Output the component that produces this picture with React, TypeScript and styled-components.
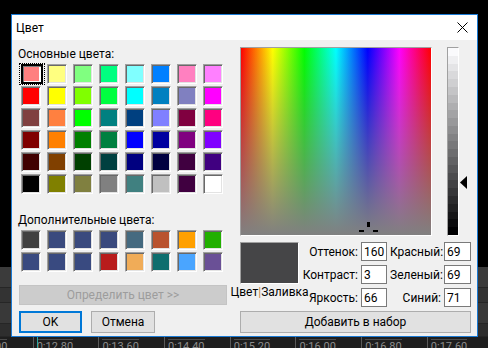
import React from 'react'
import styled, { createGlobalStyle } from 'styled-components'

const BASIC_COLORS = [
  '#ff8080', '#ffff80', '#80ff80', '#00ff80', '#80ffff', '#0080ff', '#ff80c0', '#ff80ff',
  '#ff0000', '#ffff00', '#80ff00', '#00ff40', '#00ffff', '#0080c0', '#8080c0', '#ff00ff',
  '#804040', '#ff8040', '#00ff00', '#008080', '#004080', '#8080ff', '#800040', '#ff0080',
  '#800000', '#ff8000', '#008000', '#008040', '#0000ff', '#0000a0', '#800080', '#8000ff',
  '#400000', '#804000', '#004000', '#004040', '#000080', '#000040', '#400040', '#400080',
  '#000000', '#808000', '#808040', '#808080', '#408080', '#c0c0c0', '#400040', '#ffffff',
]

const CUSTOM_COLORS = [
  '#414141', '#3a4a7e', '#3a4a7e', '#3a4a7e', '#456a80', '#b9532f', '#ffa000', '#22b000',
  '#394a80', '#394a80', '#394a80', '#b81c1c', '#f0ac58', '#0e6e6e', '#4aa5ff', '#6a5096',
]

const RULER_LABELS = ['0:12.00', '0:12.80', '0:13.60', '0:14.40', '0:15.20', '0:16.00', '0:16.80', '0:17.60', '0:18.40']

// stepped luminance bar, like the win32 dialog draws it
const LUM_STOPS = Array.from({ length: 24 }, (_, i) => {
  const v = Math.round(250 * (1 - i / 23))
  const from = ((i / 24) * 100).toFixed(2)
  const to = (((i + 1) / 24) * 100).toFixed(2)
  return `rgb(${v},${v},${Math.min(255, v + 2)}) ${from}% ${to}%`
}).join(', ')

const GlobalStyle = createGlobalStyle`
  html, body {
    margin: 0;
    padding: 0;
    background: #000;
  }
  body {
    width: 488px;
    height: 348px;
    overflow: hidden;
    font-family: Roboto, 'Liberation Sans', Arial, sans-serif;
  }
`

const Editor = styled.div`
  position: relative;
  width: 488px;
  height: 348px;
  background: #000;
  display: flex;
  flex-direction: column;
  overflow: hidden;
`

const Workspace = styled.div`
  flex: 1;
  display: flex;
  flex-direction: column;
  justify-content: flex-end;
`

const Track = styled.div<{ $shade: string; $h: number }>`
  height: ${p => p.$h}px;
  background: ${p => p.$shade};
  border-bottom: 1px solid #262626;
`

const Ruler = styled.div`
  position: relative;
  height: 11px;
  flex: 0 0 11px;
  background: #1e1e1e;
  display: flex;
  margin-left: -33px;
  overflow: hidden;
`

const Tick = styled.div`
  flex: 0 0 65.7px;
  box-sizing: border-box;
  border-left: 1px solid #5a5a5a;
  padding: 3px 0 0 3px;
  font-size: 11px;
  line-height: 12px;
  color: #8c8c8c;
  span {
    display: inline-block;
    border-top: 1px solid #4a4a4a;
    padding-top: 1px;
    margin-top: -1px;
  }
`

const Playhead = styled.div`
  position: absolute;
  left: 70px;
  top: 0;
  bottom: 0;
  width: 1px;
  background: #2aa7a0;
`

const Dialog = styled.div`
  position: absolute;
  left: 11px;
  top: 14px;
  width: 467px;
  height: 323px;
  box-sizing: border-box;
  border: 1px solid #1a7ad4;
  background: #f0f0f0;
  display: flex;
  flex-direction: column;
  font-size: 12px;
  color: #000;
`

const TitleBar = styled.div`
  height: 25px;
  flex: 0 0 25px;
  background: #fff;
  display: flex;
  align-items: center;
  justify-content: space-between;
  padding: 0 9px 0 4px;
  font-size: 12px;
`

const Body = styled.div`
  flex: 1;
  display: flex;
  gap: 13px;
  padding: 6px 5px 0 7px;
`

const LeftPane = styled.div`
  width: 208px;
  display: flex;
  flex-direction: column;
`

const SectionLabel = styled.div<{ $gap?: number }>`
  height: 17px;
  line-height: 17px;
  margin: ${p => p.$gap ?? 0}px 0 0 -1px;
  white-space: nowrap;
`

const SwatchGrid = styled.div`
  display: grid;
  grid-template-columns: repeat(8, 26px);
  grid-auto-rows: 22px;
`

const Cell = styled.div<{ $selected?: boolean }>`
  box-sizing: border-box;
  padding: 1px 0 0 2px;
  outline: ${p => (p.$selected ? '1px dotted #000' : 'none')};
  outline-offset: -1px;
`

const Swatch = styled.div<{ $color: string; $selected?: boolean }>`
  width: 18px;
  height: ${p => (p.$selected ? 16 : 18)}px;
  background: ${p => p.$color};
  border-style: solid;
  border-width: ${p => (p.$selected ? 2 : 1)}px;
  border-color: ${p => (p.$selected ? '#000' : '#a0a0a0 #fff #fff #a0a0a0')};
  box-shadow: ${p =>
    p.$selected
      ? 'inset 1px 1px 0 #7a7a7a, inset -2px -1px 0 #fff'
      : 'inset 1px 1px 0 #696969, inset -1px -1px 0 #e3e3e3'};
`

const Button = styled.button<{ $w?: number; $primary?: boolean }>`
  width: ${p => (p.$w ? `${p.$w}px` : '100%')};
  height: 22px;
  box-sizing: border-box;
  padding: 0;
  background: #e1e1e1;
  border: ${p => (p.$primary ? '2px solid #0078d7' : '1px solid #adadad')};
  font-family: inherit;
  font-size: 12px;
  color: #000;
  &:disabled {
    background: #cccccc;
    border-color: #c4c4c4;
    color: #9d9d9d;
  }
`

const DefineButton = styled(Button)`
  height: 20px;
  margin-top: 12px;
`

const ButtonRow = styled.div`
  display: flex;
  gap: 9px;
  margin-top: 6px;
`

const RightPane = styled.div`
  width: 231px;
  display: flex;
  flex-direction: column;
`

const PickerRow = styled.div`
  display: flex;
  height: 189px;
  margin-top: 1px;
`

const Spectrum = styled.div`
  position: relative;
  width: 192px;
  box-sizing: border-box;
  border: 1px solid;
  border-color: #a0a0a0 #fff #fff #a0a0a0;
  background:
    linear-gradient(to bottom, rgba(128, 128, 128, 0), #808080),
    linear-gradient(to right, #f00, #ff0, #0f0, #0ff, #00f, #f0f, #f00);
`

const Crosshair = styled.svg`
  position: absolute;
  left: 117px;
  top: 172px;
`

const LumSlider = styled.div`
  position: relative;
  margin-left: 15px;
  width: 21px;
`

const LumBar = styled.div`
  width: 12px;
  height: 100%;
  box-sizing: border-box;
  border: 1px solid;
  border-color: #a0a0a0 #fff #fff #a0a0a0;
  background: linear-gradient(to bottom, ${LUM_STOPS});
`

const LumArrow = styled.svg`
  position: absolute;
  left: 13px;
`

const ValuesRow = styled.div`
  display: flex;
  gap: 1px;
  margin-top: 6px;
`

const PreviewBlock = styled.div`
  width: 59px;
  display: flex;
  flex-direction: column;
  align-items: center;
`

const Preview = styled.div<{ $color: string }>`
  width: 59px;
  height: 42px;
  box-sizing: border-box;
  border: 1px solid;
  border-color: #a0a0a0 #fff #fff #a0a0a0;
  background: ${p => p.$color};
`

const PreviewCaption = styled.div`
  margin-top: 1px;
  line-height: 15px;
  white-space: nowrap;
  b {
    font-weight: normal;
    color: #c98a3e;
  }
`

const Fields = styled.div`
  display: grid;
  grid-template-columns: 58px 26px 51px 27px;
  grid-auto-rows: 19px;
  column-gap: 3px;
  row-gap: 4px;
  align-items: center;
`

const FieldLabel = styled.div`
  text-align: right;
  white-space: nowrap;
`

const Field = styled.input`
  width: 100%;
  height: 19px;
  box-sizing: border-box;
  border: 1px solid #7a7a7a;
  background: #fff;
  padding: 0 0 0 2px;
  margin: 0;
  font-family: inherit;
  font-size: 12px;
  color: #000;
  outline: none;
`

const AddButton = styled(Button)`
  margin-top: 4px;
`

const CloseIcon = () => (
  <svg width="11" height="11" viewBox="0 0 11 11">
    <path d="M0.5 0.5 L10.5 10.5 M10.5 0.5 L0.5 10.5" stroke="#000" strokeWidth="1" fill="none" />
  </svg>
)

const fields: [string, string, string, string][] = [
  ['Оттенок:', '160', 'Красный:', '69'],
  ['Контраст:', '3', 'Зеленый:', '69'],
  ['Яркость:', '66', 'Синий:', '71'],
]

export default function App() {
  return (
    <>
      <GlobalStyle />
      <Editor>
        <Workspace>
          <Track $shade="#3b3b3b" $h={20} />
          <Track $shade="#333333" $h={14} />
          <Track $shade="#393939" $h={20} />
          <Track $shade="#2e2e2e" $h={12} />
        </Workspace>
        <Ruler>
          {RULER_LABELS.map(l => (
            <Tick key={l}>
              <span>{l}</span>
            </Tick>
          ))}
          <Playhead />
        </Ruler>

        <Dialog>
          <TitleBar>
            <span>Цвет</span>
            <CloseIcon />
          </TitleBar>
          <Body>
            <LeftPane>
              <SectionLabel>Основные цвета:</SectionLabel>
              <SwatchGrid>
                {BASIC_COLORS.map((c, i) => (
                  <Cell key={i} $selected={i === 0}>
                    <Swatch $color={c} $selected={i === 0} />
                  </Cell>
                ))}
              </SwatchGrid>
              <SectionLabel $gap={17}>Дополнительные цвета:</SectionLabel>
              <SwatchGrid>
                {CUSTOM_COLORS.map((c, i) => (
                  <Cell key={i}>
                    <Swatch $color={c} />
                  </Cell>
                ))}
              </SwatchGrid>
              <DefineButton disabled>Определить цвет &gt;&gt;</DefineButton>
              <ButtonRow>
                <Button $w={63} $primary>OK</Button>
                <Button $w={64}>Отмена</Button>
              </ButtonRow>
            </LeftPane>

            <RightPane>
              <PickerRow>
                <Spectrum>
                  <Crosshair width="20" height="14" viewBox="0 0 20 14">
                    <rect x="9" y="2" width="3" height="5" fill="#000" />
                    <rect x="1" y="10" width="5" height="2" fill="#000" />
                    <rect x="15" y="10" width="5" height="2" fill="#000" />
                  </Crosshair>
                </Spectrum>
                <LumSlider>
                  <LumBar />
                  <LumArrow width="8" height="13" viewBox="0 0 8 13" style={{ top: 129 }}>
                    <polygon points="0,6.5 7,0 7,13" fill="#000" />
                  </LumArrow>
                </LumSlider>
              </PickerRow>
              <ValuesRow>
                <PreviewBlock>
                  <Preview $color="#454547" />
                  <PreviewCaption>
                    Цвет<b>|</b>Заливка
                  </PreviewCaption>
                </PreviewBlock>
                <Fields>
                  {fields.map(([l1, v1, l2, v2]) => (
                    <React.Fragment key={l1}>
                      <FieldLabel>{l1}</FieldLabel>
                      <Field readOnly value={v1} />
                      <FieldLabel>{l2}</FieldLabel>
                      <Field readOnly value={v2} />
                    </React.Fragment>
                  ))}
                </Fields>
              </ValuesRow>
              <AddButton>Добавить в набор</AddButton>
            </RightPane>
          </Body>
        </Dialog>
      </Editor>
    </>
  )
}
